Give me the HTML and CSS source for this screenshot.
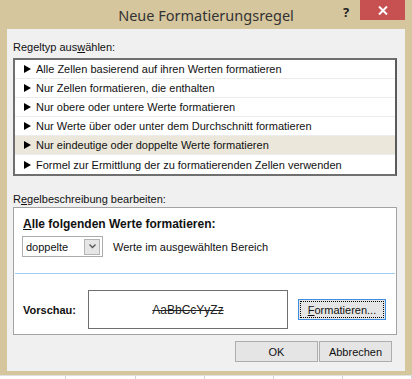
FILE: index.html
```html
<!DOCTYPE html>
<html>
<head>
  <meta charset="UTF-8">
  <title>Neue Formatierungsregel</title>
  <link rel="stylesheet" href="styles.css">
</head>
<body>
  <div class="window">
    <div class="titlebar">
      <span class="title">Neue Formatierungsregel</span>
      <span class="help">?</span>
      <span class="close">
        <svg width="10" height="9" viewBox="0 0 10 9"><path d="M1 0.5 L9 8.5 M9 0.5 L1 8.5" stroke="#fff" stroke-width="2"/></svg>
      </span>
    </div>

    <div class="client">
      <div class="label">Regeltyp aus<u>w</u>ählen:</div>
      <ul class="rule-list">
        <li><i class="arrow"></i>Alle Zellen basierend auf ihren Werten formatieren</li>
        <li><i class="arrow"></i>Nur Zellen formatieren, die enthalten</li>
        <li><i class="arrow"></i>Nur obere oder untere Werte formatieren</li>
        <li><i class="arrow"></i>Nur Werte über oder unter dem Durchschnitt formatieren</li>
        <li class="selected"><i class="arrow"></i>Nur eindeutige oder doppelte Werte formatieren</li>
        <li><i class="arrow"></i>Formel zur Ermittlung der zu formatierenden Zellen verwenden</li>
      </ul>

      <div class="label desc-label">R<u>e</u>gelbeschreibung bearbeiten:</div>
      <div class="desc-panel">
        <div class="desc-title"><u>A</u>lle folgenden Werte formatieren:</div>
        <div class="desc-row">
          <div class="combo">
            <span class="combo-text">doppelte</span>
            <span class="combo-btn">
              <svg width="7" height="5" viewBox="0 0 7 5"><path d="M0.5 0.5 L3.5 3.5 L6.5 0.5" fill="none" stroke="#555" stroke-width="1.3"/></svg>
            </span>
          </div>
          <span>Werte im ausgewählten Bereich</span>
        </div>
        <div class="separator"></div>
        <div class="preview-row">
          <span class="preview-label">Vorschau:</span>
          <div class="preview-box"><s>AaBbCcYyZz</s></div>
          <div class="btn btn-focus"><span class="focus-rect"><u>F</u>ormatieren...</span></div>
        </div>
      </div>

      <div class="dialog-buttons">
        <div class="btn btn-ok">OK</div>
        <div class="btn btn-cancel">Abbrechen</div>
      </div>
    </div>
  </div>

  <div class="sheet">
    <span></span><span></span><span></span><span></span><span></span><span></span>
  </div>
</body>
</html>
```

FILE: styles.css
```css
* {
  margin: 0;
  padding: 0;
  box-sizing: border-box;
}

body {
  width: 412px;
  height: 379px;
  overflow: hidden;
  background: #fff;
  font-family: 'Liberation Sans', Arial, sans-serif;
  font-size: 11px;
  color: #111;
}

.window {
  height: 375px;
  background: #d5c69d;
  padding: 0 7px 4px 7px;
}

/* barre de titre */
.titlebar {
  height: 29px;
  position: relative;
  display: flex;
  align-items: center;
  justify-content: center;
}

.title {
  font-family: 'Noto Sans', sans-serif;
  font-size: 14.5px;
  color: #333;
  margin-top: 1px;
}

.help {
  position: absolute;
  left: 336px;
  top: 3px;
  font-family: 'Noto Sans', sans-serif;
  font-size: 13px;
  font-weight: bold;
  color: #222;
}

.close {
  position: absolute;
  left: 353px;
  top: 0;
  width: 45px;
  height: 20px;
  background: #c75050;
  display: flex;
  align-items: center;
  justify-content: center;
}

/* zone client */
.client {
  height: 342px;
  background: #f0f0f0;
  padding: 10px 8px 0 6px;
}

.label {
  line-height: 16px;
  height: 16px;
}

.rule-list {
  list-style: none;
  margin-top: 3px;
  height: 118px;
  background: #fff;
  border: 2px solid #6f6f6f;
  border-right-color: #5a5a5a;
}

.rule-list li {
  height: 19px;
  line-height: 18px;
  border-bottom: 1px solid #ececec;
  padding-left: 9px;
  display: flex;
  align-items: center;
  white-space: nowrap;
}

.rule-list li:last-child {
  border-bottom: none;
}

.rule-list li.selected {
  background: #ebe7da;
}

.arrow {
  width: 0;
  height: 0;
  border-left: 7px solid #000;
  border-top: 4px solid transparent;
  border-bottom: 4px solid transparent;
  margin-right: 5px;
}

.desc-label {
  margin-top: 15px;
}

.desc-panel {
  height: 128px;
  background: #fff;
  border: 1px solid #a3a3a3;
  padding: 8px 1px 0 9px;
}

.desc-title {
  font-weight: bold;
  font-size: 12px;
  line-height: 16px;
  height: 16px;
}

.desc-row {
  margin-top: 4px;
  display: flex;
  align-items: center;
  gap: 10px;
}

.combo {
  margin-left: -1px;
  width: 81px;
  height: 21px;
  border: 1px solid #acacac;
  display: flex;
  align-items: center;
  justify-content: space-between;
  padding: 0 2px 0 3px;
}

.combo-btn {
  width: 16px;
  height: 16px;
  background: #e6e6e6;
  border: 1px solid #b4b4b4;
  display: flex;
  align-items: center;
  justify-content: center;
}

.separator {
  margin: 16px 0 0 -8px;
  height: 1px;
  background: #9fcdf5;
}

.preview-row {
  margin-top: 16px;
  display: flex;
  align-items: center;
}

.preview-label {
  font-weight: bold;
  width: 65px;
}

.preview-box {
  width: 200px;
  height: 39px;
  border: 1px solid #6f6f6f;
  display: flex;
  align-items: center;
  justify-content: center;
  font-size: 12px;
  color: #222;
}

.btn {
  height: 21px;
  border: 1px solid #adadad;
  background: #e5e5e5;
  display: flex;
  align-items: center;
  justify-content: center;
}

.btn-focus {
  margin-left: 10px;
  width: 88px;
  border-color: #3c8ce0;
  padding: 1px;
}

.focus-rect {
  width: 100%;
  height: 100%;
  border: 1px dotted #000;
  display: flex;
  align-items: center;
  justify-content: center;
}

.dialog-buttons {
  margin-top: 6px;
  display: flex;
  justify-content: flex-end;
  gap: 1px;
  padding-right: 5px;
}

.btn-ok {
  width: 83px;
}

.btn-cancel {
  width: 73px;
}

/* feuille excel derrière */
.sheet {
  height: 4px;
  display: flex;
  border-top: 1px solid #e0e0e0;
}

.sheet span {
  width: 79px;
  border-right: 1px solid #d4d4d4;
}

.sheet span:first-child {
  width: 76px;
}
```
